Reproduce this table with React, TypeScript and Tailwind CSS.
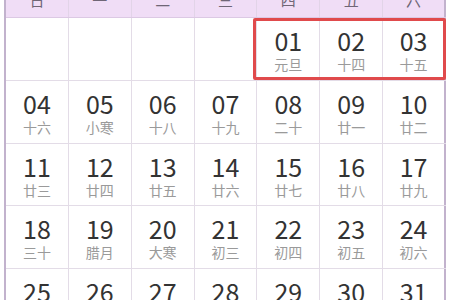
import React from "react";

const head = ["日", "一", "二", "三", "四", "五", "六"];
type C = { d: string; l: string } | null;
const rows: C[][] = [
  [null, null, null, null, { d: "01", l: "元旦" }, { d: "02", l: "十四" }, { d: "03", l: "十五" }],
  [
    { d: "04", l: "十六" }, { d: "05", l: "小寒" }, { d: "06", l: "十八" }, { d: "07", l: "十九" },
    { d: "08", l: "二十" }, { d: "09", l: "廿一" }, { d: "10", l: "廿二" },
  ],
  [
    { d: "11", l: "廿三" }, { d: "12", l: "廿四" }, { d: "13", l: "廿五" }, { d: "14", l: "廿六" },
    { d: "15", l: "廿七" }, { d: "16", l: "廿八" }, { d: "17", l: "廿九" },
  ],
  [
    { d: "18", l: "三十" }, { d: "19", l: "腊月" }, { d: "20", l: "大寒" }, { d: "21", l: "初三" },
    { d: "22", l: "初四" }, { d: "23", l: "初五" }, { d: "24", l: "初六" },
  ],
  [
    { d: "25", l: "初七" }, { d: "26", l: "初八" }, { d: "27", l: "初九" }, { d: "28", l: "初十" },
    { d: "29", l: "十一" }, { d: "30", l: "十二" }, { d: "31", l: "十三" },
  ],
];

export default function App() {
  return (
    <div
      className="w-[450px] h-[300px] overflow-hidden bg-white"
      style={{ fontFamily: '"Noto Sans CJK SC", "Noto Sans", sans-serif' }}
    >
      <div className="ml-[4px] w-[442px] border-l-2 border-[#c2b2cd]">
        <div className="grid grid-cols-7 h-[34px] -mt-[16px] bg-[#f0ddf6] border-b border-[#dcc9e4]">
          {head.map((h, i) => (
            <div
              key={i}
              className={`flex items-center justify-center text-[15px] text-[#6f6676] ${
                i === 6 ? "border-r-2 border-[#c2b2cd]" : "border-r border-[#e2d4e8]"
              }`}
            >
              {h}
            </div>
          ))}
        </div>
        {rows.map((r, ri) => (
          <div key={ri} className="relative grid grid-cols-7 h-[62.75px] border-b border-[#e3dce7]">
            {r.map((c, ci) => (
              <div
                key={ci}
                className={`flex flex-col items-center pt-[8px] ${
                  ci === 6 ? "border-r-2 border-[#c2b2cd]" : "border-r border-[#e3dce7]"
                }`}
              >
                {c && (
                  <>
                    <div className="text-[25px] leading-[28px] text-[#333333]">{c.d}</div>
                    <div className="text-[14px] leading-[16px] mt-[2px] text-[#9a9a9a]">{c.l}</div>
                  </>
                )}
              </div>
            ))}
            {ri === 0 && (
              <div className="absolute left-[247px] top-0 w-[193px] h-[62px] border-[3px] border-[#e04a4c] rounded-[2px]" />
            )}
          </div>
        ))}
      </div>
    </div>
  );
}
